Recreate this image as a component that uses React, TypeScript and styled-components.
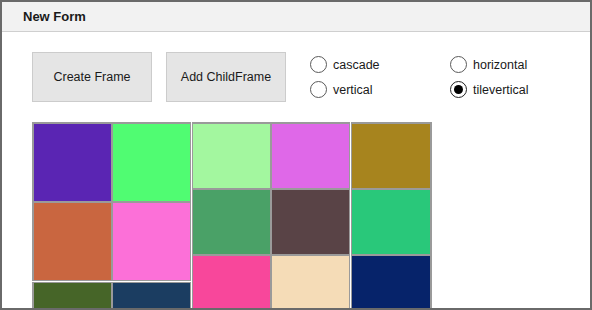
import type { FC } from 'react';
import styled, { createGlobalStyle } from 'styled-components';

const GlobalStyle = createGlobalStyle`
  html, body {
    margin: 0;
    padding: 0;
    background: #ffffff;
  }
  * {
    box-sizing: border-box;
  }
`;

const Window = styled.div`
  width: 592px;
  height: 310px;
  border: 2px solid #6a6a6a;
  background: #ffffff;
  overflow: hidden;
  font-family: "Liberation Sans", Arial, sans-serif;
  color: #111;
`;

const TitleBar = styled.div`
  height: 30px;
  background: #f2f2f2;
  border-bottom: 1px solid #cfcfcf;
  display: flex;
  align-items: center;
  padding-left: 21px;
  font-size: 13px;
  font-weight: 700;
  color: #1a1a1a;
`;

const Body = styled.div`
  padding: 20px 0 0 30px;
  display: flex;
  flex-direction: column;
  gap: 20px;
`;

const Toolbar = styled.div`
  display: flex;
  align-items: flex-start;
`;

const Button = styled.button`
  width: 120px;
  height: 50px;
  margin-right: 14px;
  background: #e5e5e5;
  border: 1px solid #cccccc;
  font-family: inherit;
  font-size: 12.5px;
  color: #1a1a1a;
  padding: 0;
`;

const RadioGrid = styled.div`
  margin-left: 10px;
  display: grid;
  grid-template-columns: 140px 120px;
  grid-auto-rows: 25px;
`;

const RadioLabel = styled.label`
  display: flex;
  align-items: center;
  gap: 6px;
  font-size: 12.5px;
  color: #1a1a1a;
`;

const RadioCircle = styled.span<{ $checked?: boolean }>`
  width: 17px;
  height: 17px;
  border-radius: 50%;
  border: 1px solid ${p => (p.$checked ? '#222' : '#5a5a5a')};
  background: #fff;
  display: flex;
  align-items: center;
  justify-content: center;

  &::after {
    content: '';
    display: ${p => (p.$checked ? 'block' : 'none')};
    width: 9px;
    height: 9px;
    border-radius: 50%;
    background: #000;
  }
`;

const Canvas = styled.div`
  display: flex;
  gap: 1px;
  align-items: flex-start;
`;

const Column = styled.div`
  display: flex;
  flex-direction: column;
  gap: 1px;
`;

// frames sit side by side; the edge next to a white separator is 1px thinner
const Frame = styled.div<{ $width: number; $cols: number; $tile: number; $pad: string }>`
  width: ${p => p.$width}px;
  display: grid;
  grid-template-columns: repeat(${p => p.$cols}, 1fr);
  grid-auto-rows: ${p => p.$tile}px;
  gap: 2px;
  padding: ${p => p.$pad};
  background: #9a9a9a;
`;

const Tile = styled.div<{ $color: string }>`
  background: ${p => p.$color};
`;

const radios = [
  { label: 'cascade', checked: false },
  { label: 'horizontal', checked: false },
  { label: 'vertical', checked: false },
  { label: 'tilevertical', checked: true },
];

const App: FC = () => {
  return (
    <Window>
      <GlobalStyle />
      <TitleBar>New Form</TitleBar>
      <Body>
        <Toolbar>
          <Button>Create Frame</Button>
          <Button>Add ChildFrame</Button>
          <RadioGrid>
            {radios.map(r => (
              <RadioLabel key={r.label}>
                <RadioCircle $checked={r.checked} />
                {r.label}
              </RadioLabel>
            ))}
          </RadioGrid>
        </Toolbar>

        <Canvas>
          <Column>
            <Frame $width={159} $cols={2} $tile={77} $pad="2px 1px 1px 2px">
              <Tile $color="#5a25b3" />
              <Tile $color="#50fc72" />
              <Tile $color="#c96640" />
              <Tile $color="#fc70d8" />
            </Frame>
            <Frame $width={159} $cols={2} $tile={77} $pad="1px 1px 2px 2px">
              <Tile $color="#466528" />
              <Tile $color="#1b3d61" />
            </Frame>
          </Column>
          <Frame $width={158} $cols={2} $tile={64} $pad="2px 1px 2px 1px">
            <Tile $color="#a3f79f" />
            <Tile $color="#df68e8" />
            <Tile $color="#4aa167" />
            <Tile $color="#594346" />
            <Tile $color="#f8479b" />
            <Tile $color="#f5dcb7" />
          </Frame>
          <Frame $width={81} $cols={1} $tile={64} $pad="2px 2px 2px 1px">
            <Tile $color="#a7841e" />
            <Tile $color="#29c87a" />
            <Tile $color="#06236a" />
          </Frame>
        </Canvas>
      </Body>
    </Window>
  );
};

export default App;
